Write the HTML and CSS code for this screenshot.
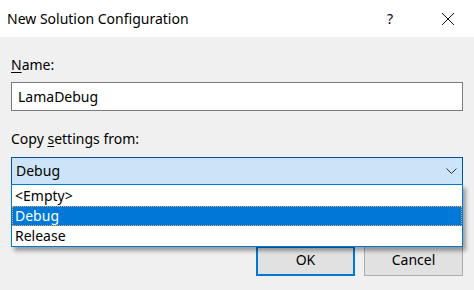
FILE: index.html
```html
<!DOCTYPE html>
<html>
<head>
	<title>New Solution Configuration</title>
	<link rel="stylesheet" href="styles.css">
</head>
<body>

	<div class="dialog">
		<div class="titlebar">
			<span class="title">New Solution Configuration</span>
			<span class="help">?</span>
			<svg class="close" width="14" height="14" viewBox="0 0 14 14">
				<path d="M1 1 L13 13 M13 1 L1 13" stroke="#111" stroke-width="1" fill="none"/>
			</svg>
		</div>

		<div class="body">
			<label class="lbl"><u>N</u>ame:</label>
			<div class="textbox">LamaDebug</div>

			<label class="lbl lbl-copy">Copy <u>s</u>ettings from:</label>
			<div class="combo-wrap">
				<div class="combo">
					<span>Debug</span>
					<svg class="chev" width="11" height="6" viewBox="0 0 11 6">
						<path d="M0.5 0.5 L5.5 5.5 L10.5 0.5" stroke="#333" stroke-width="1" fill="none"/>
					</svg>
				</div>
				<ul class="dropdown">
					<li class="first">&lt;Empty&gt;</li>
					<li class="sel">Debug</li>
					<li>Release</li>
				</ul>
			</div>

			<div class="buttons">
				<button class="btn btn-ok">OK</button>
				<button class="btn">Cancel</button>
			</div>
		</div>
	</div>

</body>
</html>
```

FILE: styles.css
```css
*{
	box-sizing: border-box;
	padding: 0;
	margin: 0;
}

body{
	background-color: #f0f0f0;
	font-family: "Noto Sans", "Open Sans", sans-serif;
	font-size: 14px;
	color: #000;
	width: 474px;
	height: 290px;
	overflow: hidden;
}

.titlebar{
	height: 37px;
	background-color: #fff;
	display: flex;
	align-items: center;
	padding-left: 7px;
}
.titlebar .title{
	flex: 1;
	color: #000;
	padding-bottom: 1px;
}
.titlebar .help{
	width: 14px;
	margin-right: 40px;
	padding-bottom: 1px;
}
.titlebar .close{
	margin-right: 19px;
}

.body{
	padding: 0 11px;
	display: flex;
	flex-direction: column;
}

.lbl{
	display: block;
	margin-top: 18px;
	line-height: 20px;
}
.lbl u{
	text-decoration-thickness: 1px;
	text-underline-offset: 2px;
}

.textbox{
	margin-top: 7px;
	height: 29px;
	background-color: #fff;
	border: 1px solid #7a7a7a;
	padding-left: 6px;
	line-height: 27px;
}

.combo-wrap{
	position: relative;
	margin-top: 8px;
}
.combo{
	height: 28px;
	background-color: #cce4f7;
	border: 1px solid #005499;
	display: flex;
	align-items: center;
	justify-content: space-between;
	padding: 0 5px 0 4px;
}
.combo span{
	padding-bottom: 1px;
}

.dropdown{
	position: absolute;
	left: 0;
	right: 0;
	top: 27px;
	list-style: none;
	background-color: #fff;
	border: 1px solid #0078d7;
	box-shadow: 3px 4px 4px rgba(0,0,0,.35);
	z-index: 2;
}
.dropdown li{
	height: 20px;
	line-height: 19px;
	padding-left: 3px;
}
.dropdown li.first{
	height: 21px;
	line-height: 21px;
}
.dropdown li.sel{
	background-color: #0078d7;
	color: #fff;
	outline: 1px dotted #e8a060;
	outline-offset: -1px;
}

.buttons{
	display: flex;
	justify-content: flex-end;
	gap: 9px;
	margin-top: 61px;
}
.btn{
	width: 99px;
	height: 30px;
	font-family: inherit;
	font-size: 14px;
	background-color: #e1e1e1;
	border: 1px solid #adadad;
	color: #000;
	padding-bottom: 3px;
}
.btn-ok{
	border: 2px solid #0078d7;
}
```
